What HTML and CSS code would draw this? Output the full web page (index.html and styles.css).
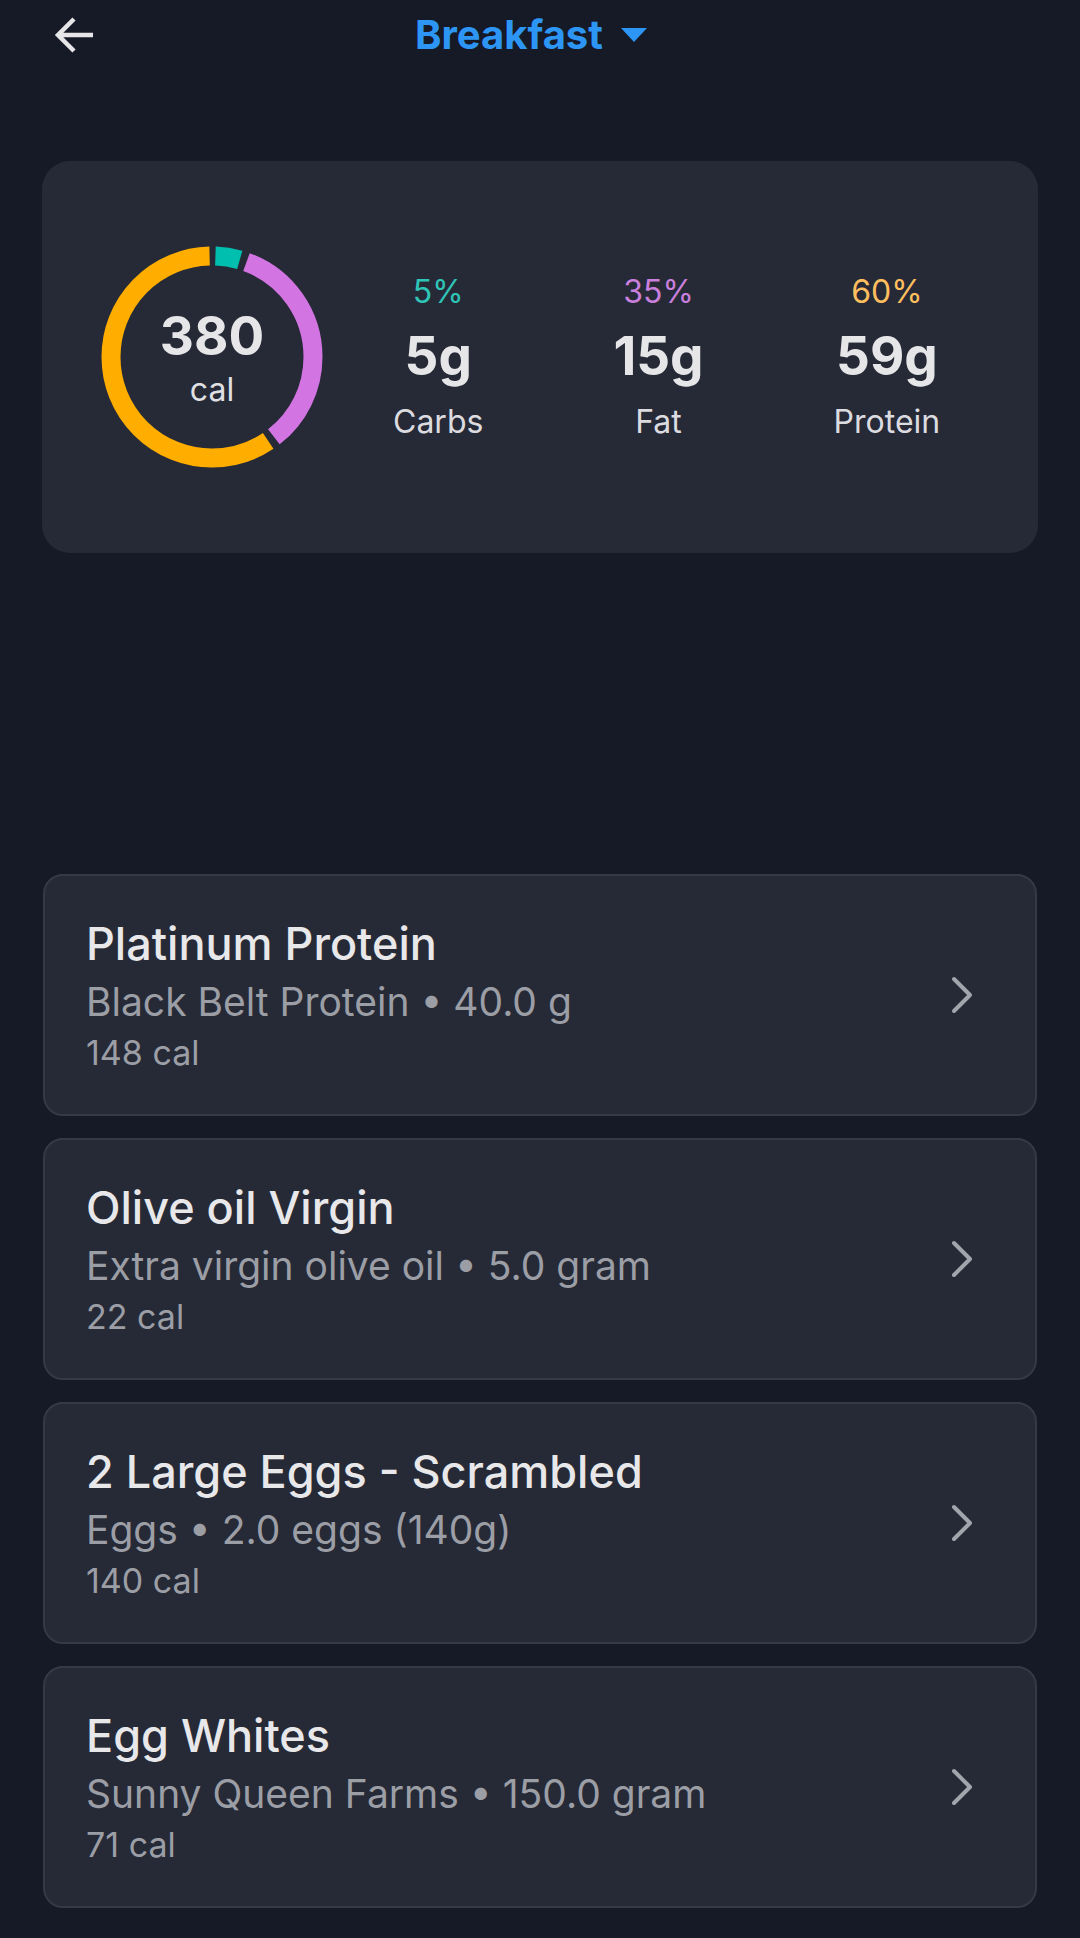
FILE: index.html
```html
<!DOCTYPE html>
<html lang="en">
<head>
  <meta charset="UTF-8">
  <meta name="viewport" content="width=device-width, initial-scale=1.0">
  <title>Breakfast</title>
  <link rel="stylesheet" href="styles.css">
</head>
<body>
  <header class="topbar">
    <div class="back">
      <svg width="42" height="40" viewBox="0 0 42 40"><path d="M40 20H5M21 4L5 20L21 36" fill="none" stroke="#e6e6e8" stroke-width="4.5" stroke-linejoin="miter"/></svg>
    </div>
    <div class="meal-picker">
      <span class="meal-name">Breakfast</span>
      <svg width="26" height="14" viewBox="0 0 26 14"><polygon points="0,0 26,0 13,14" fill="#2d96f5"/></svg>
    </div>
    <div></div>
  </header>

  <main>
    <section class="summary">
      <div class="donut">
        <svg width="222" height="222" viewBox="0 0 222 222">
          <g transform="rotate(-90 111 111)" fill="none" stroke-width="19">
            <circle cx="111" cy="111" r="101" stroke="#00bfae" stroke-dasharray="24.7 634.6" stroke-dashoffset="-3.5"/>
            <circle cx="111" cy="111" r="101" stroke="#d274e2" stroke-dasharray="215.1 634.6" stroke-dashoffset="-35.2"/>
            <circle cx="111" cy="111" r="101" stroke="#ffae00" stroke-dasharray="373.8 634.6" stroke-dashoffset="-257.3"/>
          </g>
        </svg>
        <div class="donut-label">
          <span class="kcal">380</span>
          <span class="unit">cal</span>
        </div>
      </div>
      <div class="macros">
        <div class="macro">
          <span class="pct carbs">5%</span>
          <span class="grams">5g</span>
          <span class="macro-name">Carbs</span>
        </div>
        <div class="macro">
          <span class="pct fat">35%</span>
          <span class="grams">15g</span>
          <span class="macro-name">Fat</span>
        </div>
        <div class="macro">
          <span class="pct protein">60%</span>
          <span class="grams">59g</span>
          <span class="macro-name">Protein</span>
        </div>
      </div>
    </section>

    <section class="food-list">
      <div class="food">
        <div class="food-info">
          <h3>Platinum Protein</h3>
          <p class="desc">Black Belt Protein • 40.0 g</p>
          <p class="cal">148 cal</p>
        </div>
        <svg class="chevron" width="22" height="38" viewBox="0 0 22 38"><path d="M3 3L19 19L3 35" fill="none" stroke="#a3a5ad" stroke-width="4" stroke-linecap="round" stroke-linejoin="round"/></svg>
      </div>
      <div class="food">
        <div class="food-info">
          <h3>Olive oil Virgin</h3>
          <p class="desc">Extra virgin olive oil • 5.0 gram</p>
          <p class="cal">22 cal</p>
        </div>
        <svg class="chevron" width="22" height="38" viewBox="0 0 22 38"><path d="M3 3L19 19L3 35" fill="none" stroke="#a3a5ad" stroke-width="4" stroke-linecap="round" stroke-linejoin="round"/></svg>
      </div>
      <div class="food">
        <div class="food-info">
          <h3>2 Large Eggs - Scrambled</h3>
          <p class="desc">Eggs • 2.0 eggs (140g)</p>
          <p class="cal">140 cal</p>
        </div>
        <svg class="chevron" width="22" height="38" viewBox="0 0 22 38"><path d="M3 3L19 19L3 35" fill="none" stroke="#a3a5ad" stroke-width="4" stroke-linecap="round" stroke-linejoin="round"/></svg>
      </div>
      <div class="food">
        <div class="food-info">
          <h3>Egg Whites</h3>
          <p class="desc">Sunny Queen Farms • 150.0 gram</p>
          <p class="cal">71 cal</p>
        </div>
        <svg class="chevron" width="22" height="38" viewBox="0 0 22 38"><path d="M3 3L19 19L3 35" fill="none" stroke="#a3a5ad" stroke-width="4" stroke-linecap="round" stroke-linejoin="round"/></svg>
      </div>
    </section>
  </main>
</body>
</html>
```

FILE: styles.css
```css
body {
  margin: 0;
  background-color: #161a26;
  color: #e6e6e8;
  font-family: Inter, "Noto Sans", sans-serif;
}
.topbar {
  display: grid;
  grid-template-columns: 1fr auto 1fr;
  align-items: center;
  padding-top: 11px;
  height: 48px;
}
.back {
  display: flex;
  align-items: center;
  padding-left: 53px;
}
.meal-picker {
  display: flex;
  align-items: center;
  gap: 18px;
  padding-right: 18px;
}
.meal-name {
  font-size: 40px;
  line-height: 48px;
  font-weight: 700;
  color: #2d96f5;
}
.summary {
  margin: 102px 42px 0;
  height: 392px;
  border-radius: 28px;
  background-color: #262a36;
  display: flex;
  align-items: center;
  padding-left: 59px;
}
.donut {
  position: relative;
  width: 222px;
  height: 222px;
}
.donut svg {
  display: block;
}
.donut-label {
  position: absolute;
  inset: 0;
  display: flex;
  flex-direction: column;
  align-items: center;
  justify-content: center;
  margin-top: 2px;
}
.kcal {
  font-size: 53px;
  line-height: 60px;
  font-weight: 700;
  color: #e6e6e8;
}
.unit {
  font-size: 32px;
  line-height: 40px;
  margin-top: 4px;
  color: #e0e0e4;
}
.macros {
  display: flex;
  gap: 130px;
  margin-left: 70px;
}
.macro {
  display: flex;
  flex-direction: column;
  align-items: center;
}
.pct {
  font-size: 32px;
  line-height: 40px;
}
.pct.carbs {
  color: #2ec4b6;
}
.pct.fat {
  color: #c97fdc;
}
.pct.protein {
  color: #ffbf5f;
}
.grams {
  font-size: 53px;
  line-height: 64px;
  font-weight: 700;
  margin-top: 12px;
  color: #e6e6e8;
}
.macro-name {
  font-size: 32px;
  line-height: 40px;
  margin-top: 14px;
  color: #dcdce0;
}
.food-list {
  margin: 321px 43px 0;
  display: flex;
  flex-direction: column;
  gap: 22px;
}
.food {
  display: flex;
  align-items: center;
  justify-content: space-between;
  background-color: #262a36;
  border: 2px solid #353946;
  border-radius: 20px;
  padding: 40px 62px 41px 41px;
}
.food h3 {
  margin: 0;
  font-size: 45px;
  line-height: 56px;
  font-weight: 500;
  color: #e8e8ea;
}
.food .desc {
  margin: 6px 0 0;
  font-size: 39px;
  line-height: 48px;
  color: #9c9ea6;
}
.food .cal {
  margin: 7px 0 0;
  font-size: 34px;
  line-height: 40px;
  color: #9c9ea6;
}
.chevron {
  flex-shrink: 0;
}
```
